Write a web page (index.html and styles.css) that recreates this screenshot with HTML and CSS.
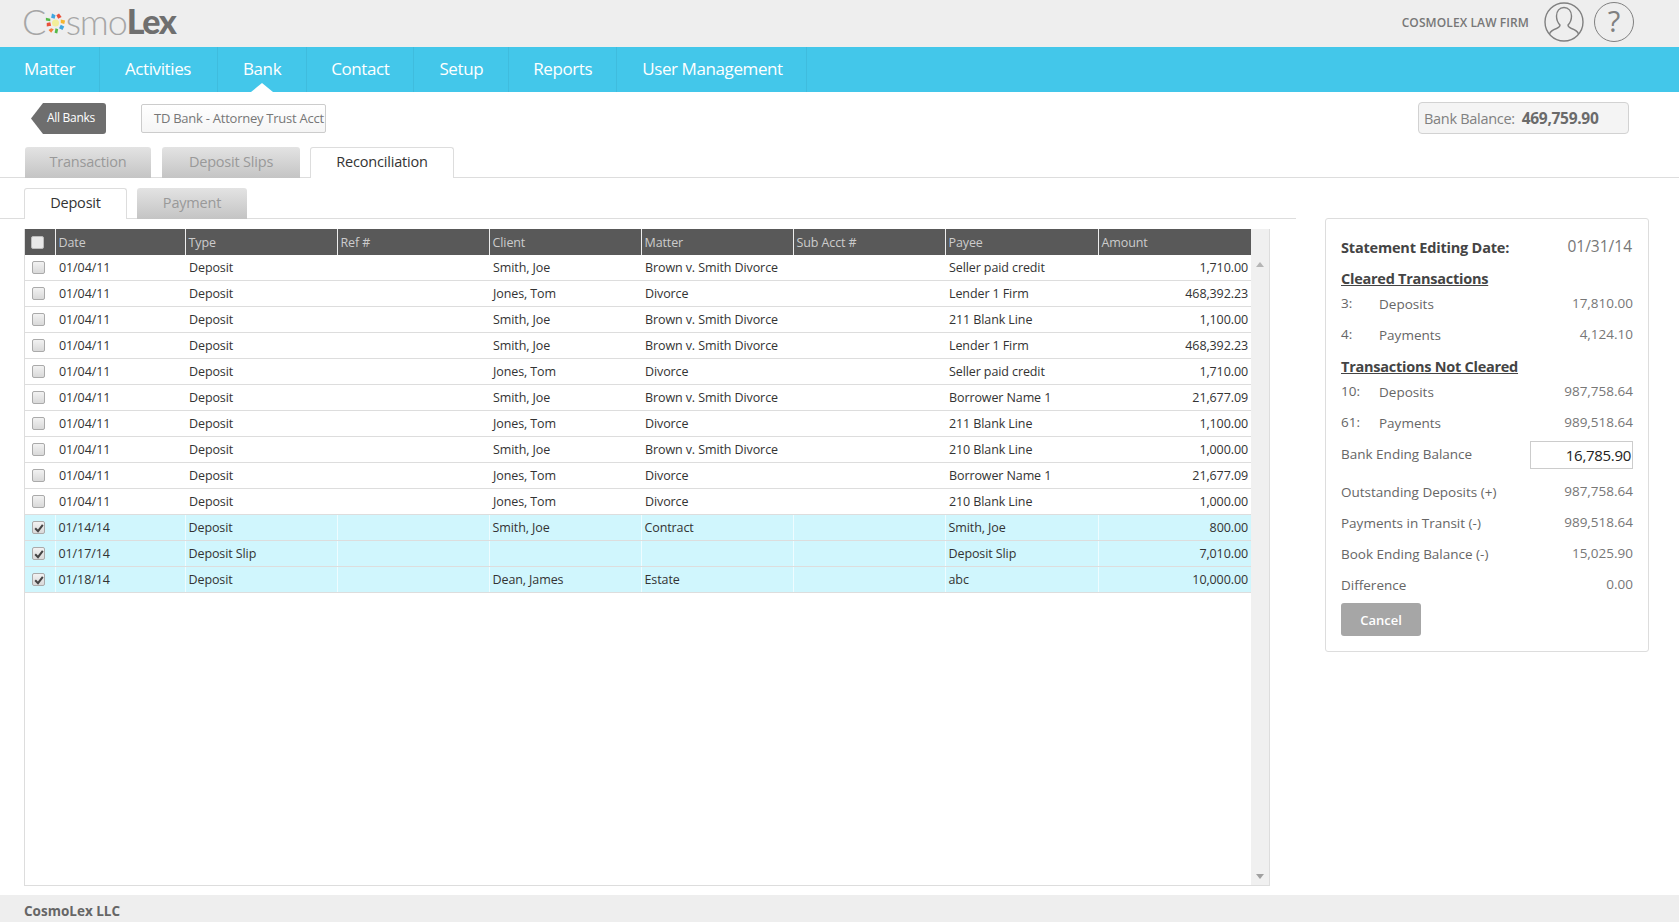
FILE: index.html
```html
<!DOCTYPE html>
<html lang="en">
<head>
<meta charset="utf-8">
<title>CosmoLex - Bank Reconciliation</title>
<link rel="stylesheet" href="styles.css">
</head>
<body>
<header class="top">
  <div class="logo"><span class="logo-thin">C</span><svg class="logo-mark" viewBox="0 0 24 24" width="21" height="24" aria-hidden="true">
    <circle cx="12" cy="12" r="4" fill="#f3ee9a"/>
    <path d="M8 1l4 2-1 4-4-1z" fill="#3fa7e0"/><path d="M13 3l3-2 3 4-4 2z" fill="#e8503a"/>
    <path d="M18 8l5 1-1 4-4-1z" fill="#f5b52e"/><path d="M18 14l4 2-2 4-4-2z" fill="#3fa7e0"/>
    <path d="M12 18l3 1-1 5-3-1z" fill="#55b948"/><path d="M7 18l3 1-3 4-3-3z" fill="#f5803a"/>
    <path d="M2 12l4-1 1 4-5 1z" fill="#e8503a"/><path d="M1 6l5 1v3L1 9z" fill="#55b948"/>
  </svg><span class="logo-thin logo-smo">smo</span><span class="logo-bold">Lex</span></div>
  <div class="top-right">
    <span class="firm">COSMOLEX LAW FIRM</span>
    <svg class="round-icon" viewBox="0 0 40 40" width="40" height="40" aria-hidden="true">
      <circle cx="20" cy="20" r="19" fill="none" stroke="#808080" stroke-width="1.4"/>
      <path d="M5.500 32c1-3 4-4.500 7-5.500 2.500-1 3.500-2 3.500-3.500-2-2-3.500-5-3.500-9C12.500 9 15.500 5.500 20 5.500S27.500 9 27.500 14c0 4-1.500 7-3.500 9 0 1.500 1 2.500 3.500 3.500 3 1 6 2.500 7 5.500" fill="none" stroke="#808080" stroke-width="1.4"/>
    </svg>
    <span class="help">?</span>
  </div>
</header>

<nav class="nav">
  <a class="nav-item">Matter</a>
  <a class="nav-item">Activities</a>
  <a class="nav-item is-current">Bank</a>
  <a class="nav-item">Contact</a>
  <a class="nav-item">Setup</a>
  <a class="nav-item">Reports</a>
  <a class="nav-item">User Management</a>
</nav>

<div class="toolbar">
  <span class="back-tag"><span>All Banks</span></span>
  <span class="bank-select">TD Bank - Attorney Trust Acct</span>
  <span class="balance">Bank Balance:<b>469,759.90</b></span>
</div>

<div class="tabs tabs-main">
  <span class="tab">Transaction</span>
  <span class="tab">Deposit Slips</span>
  <span class="tab is-active">Reconciliation</span>
</div>

<main class="content">
  <section class="left">
    <div class="tabs tabs-sub">
      <span class="tab tab-deposit is-active">Deposit</span>
      <span class="tab tab-payment">Payment</span>
    </div>
    <div class="grid-box">
      <div class="grid-wrap">
        <table class="grid">
          <colgroup><col class="c-check"><col class="c-date"><col class="c-mid"><col class="c-mid"><col class="c-mid"><col class="c-mid"><col class="c-mid"><col class="c-payee"><col class="c-amount"></colgroup>
          <thead>
            <tr><th class="cell-check"><span class="cb cb-head"></span></th><th>Date</th><th>Type</th><th>Ref #</th><th>Client</th><th>Matter</th><th>Sub Acct #</th><th>Payee</th><th>Amount</th></tr>
          </thead>
          <tbody>
            <tr><td class="cell-check"><span class="cb"></span></td><td>01/04/11</td><td>Deposit</td><td></td><td>Smith, Joe</td><td>Brown v. Smith Divorce</td><td></td><td>Seller paid credit</td><td class="num">1,710.00</td></tr>
            <tr><td class="cell-check"><span class="cb"></span></td><td>01/04/11</td><td>Deposit</td><td></td><td>Jones, Tom</td><td>Divorce</td><td></td><td>Lender 1 Firm</td><td class="num">468,392.23</td></tr>
            <tr><td class="cell-check"><span class="cb"></span></td><td>01/04/11</td><td>Deposit</td><td></td><td>Smith, Joe</td><td>Brown v. Smith Divorce</td><td></td><td>211 Blank Line</td><td class="num">1,100.00</td></tr>
            <tr><td class="cell-check"><span class="cb"></span></td><td>01/04/11</td><td>Deposit</td><td></td><td>Smith, Joe</td><td>Brown v. Smith Divorce</td><td></td><td>Lender 1 Firm</td><td class="num">468,392.23</td></tr>
            <tr><td class="cell-check"><span class="cb"></span></td><td>01/04/11</td><td>Deposit</td><td></td><td>Jones, Tom</td><td>Divorce</td><td></td><td>Seller paid credit</td><td class="num">1,710.00</td></tr>
            <tr><td class="cell-check"><span class="cb"></span></td><td>01/04/11</td><td>Deposit</td><td></td><td>Smith, Joe</td><td>Brown v. Smith Divorce</td><td></td><td>Borrower Name 1</td><td class="num">21,677.09</td></tr>
            <tr><td class="cell-check"><span class="cb"></span></td><td>01/04/11</td><td>Deposit</td><td></td><td>Jones, Tom</td><td>Divorce</td><td></td><td>211 Blank Line</td><td class="num">1,100.00</td></tr>
            <tr><td class="cell-check"><span class="cb"></span></td><td>01/04/11</td><td>Deposit</td><td></td><td>Smith, Joe</td><td>Brown v. Smith Divorce</td><td></td><td>210 Blank Line</td><td class="num">1,000.00</td></tr>
            <tr><td class="cell-check"><span class="cb"></span></td><td>01/04/11</td><td>Deposit</td><td></td><td>Jones, Tom</td><td>Divorce</td><td></td><td>Borrower Name 1</td><td class="num">21,677.09</td></tr>
            <tr><td class="cell-check"><span class="cb"></span></td><td>01/04/11</td><td>Deposit</td><td></td><td>Jones, Tom</td><td>Divorce</td><td></td><td>210 Blank Line</td><td class="num">1,000.00</td></tr>
            <tr class="is-selected"><td class="cell-check"><span class="cb"><svg viewBox="0 0 14 14" width="14" height="14" aria-hidden="true"><path d="M3.200 7.200l2.800 3 4.800-6.400" fill="none" stroke="#444" stroke-width="2"/></svg></span></td><td>01/14/14</td><td>Deposit</td><td></td><td>Smith, Joe</td><td>Contract</td><td></td><td>Smith, Joe</td><td class="num">800.00</td></tr>
            <tr class="is-selected"><td class="cell-check"><span class="cb"><svg viewBox="0 0 14 14" width="14" height="14" aria-hidden="true"><path d="M3.200 7.200l2.800 3 4.800-6.400" fill="none" stroke="#444" stroke-width="2"/></svg></span></td><td>01/17/14</td><td>Deposit Slip</td><td></td><td></td><td></td><td></td><td>Deposit Slip</td><td class="num">7,010.00</td></tr>
            <tr class="is-selected"><td class="cell-check"><span class="cb"><svg viewBox="0 0 14 14" width="14" height="14" aria-hidden="true"><path d="M3.200 7.200l2.800 3 4.800-6.400" fill="none" stroke="#444" stroke-width="2"/></svg></span></td><td>01/18/14</td><td>Deposit</td><td></td><td>Dean, James</td><td>Estate</td><td></td><td>abc</td><td class="num">10,000.00</td></tr>
          </tbody>
        </table>
      </div>
      <div class="scrollbar">
        <span class="arrow arrow-up"></span>
        <span class="arrow arrow-down"></span>
      </div>
    </div>
  </section>

  <aside class="panel">
    <div class="row row-date"><strong>Statement Editing Date:</strong><span class="val val-date">01/31/14</span></div>
    <h3 class="panel-head">Cleared Transactions</h3>
    <div class="row"><span class="count">3:</span><span class="label">Deposits</span><span class="val">17,810.00</span></div>
    <div class="row"><span class="count">4:</span><span class="label">Payments</span><span class="val">4,124.10</span></div>
    <h3 class="panel-head panel-head-next">Transactions Not Cleared</h3>
    <div class="row"><span class="count">10:</span><span class="label">Deposits</span><span class="val">987,758.64</span></div>
    <div class="row"><span class="count">61:</span><span class="label">Payments</span><span class="val">989,518.64</span></div>
    <div class="row row-input"><span class="label">Bank Ending Balance</span><span class="ending">16,785.90</span></div>
    <div class="row"><span class="label">Outstanding Deposits (+)</span><span class="val">987,758.64</span></div>
    <div class="row"><span class="label">Payments in Transit (-)</span><span class="val">989,518.64</span></div>
    <div class="row"><span class="label">Book Ending Balance (-)</span><span class="val">15,025.90</span></div>
    <div class="row"><span class="label">Difference</span><span class="val">0.00</span></div>
    <button class="cancel" type="button">Cancel</button>
  </aside>
</main>

<footer class="footer">CosmoLex LLC</footer>
</body>
</html>
```
FILE: styles.css
```css
* { box-sizing: border-box; }
html, body { height: 100%; }
body {
  margin: 0;
  height: 922px;
  display: flex;
  flex-direction: column;
  overflow: hidden;
  background: #fff;
  color: #333;
  font-family: "Open Sans", "Noto Sans", "Liberation Sans", sans-serif;
  font-size: 13px;
}

/* Header */
.top {
  height: 47px;
  flex: none;
  background: #eee;
  display: flex;
  align-items: center;
  justify-content: space-between;
  padding: 0 45px 3px 24px;
}
.logo {
  display: flex;
  align-items: center;
  font-family: "Lato", sans-serif;
  font-size: 36px;
  line-height: 40px;
  color: #a6a6a6;
  letter-spacing: -0.7px;
  margin: -2px 0 0 -2px;
}
.logo-thin { font-weight: 300; }
.logo-smo { letter-spacing: -1.1px; }
.logo-bold { font-size: 34px; font-weight: 900; color: #6f6f6f; letter-spacing: -1.5px; }
.logo-mark { margin: 3px 0 0 -1px; }
.top-right { display: flex; align-items: center; }
.firm { font-weight: 600; font-size: 12px; color: #777; margin-right: 15px; letter-spacing: 0.1px; }
.round-icon { display: block; margin-right: 10px; }
.help {
  width: 40px;
  height: 40px;
  border: 1.4px solid #808080;
  border-radius: 50%;
  text-align: center;
  font-size: 29px;
  line-height: 36px;
  color: #808080;
}

/* Nav */
.nav {
  height: 45px;
  flex: none;
  background: #43c7ea;
  display: flex;
}
.nav-item {
  position: relative;
  padding: 0 25px;
  border-right: 1px solid #3fbcde;
  color: #fff;
  font-size: 17px;
  line-height: 43px;
  letter-spacing: -0.4px;
}
.nav-item:nth-child(1) { padding: 0 24px; }
.nav-item:nth-child(2) { padding-right: 26px; }
.nav-item:nth-child(4) { padding: 0 24px; }
.nav-item:nth-child(6) { padding: 0 24px; }
.nav-item:nth-child(7) { padding-right: 23px; }
.is-current::after {
  content: "";
  position: absolute;
  left: 50%;
  bottom: 0;
  margin-left: -11px;
  border: 11px solid transparent;
  border-top: 0;
  border-bottom: 9px solid #fff;
}

/* Toolbar */
.toolbar {
  flex: none;
  height: 55px;
  display: flex;
  align-items: center;
  padding: 0 50px 2px 31px;
}
.back-tag {
  width: 75px;
  height: 31px;
  background: #6e6e6e;
  color: #fff;
  font-size: 12px;
  line-height: 29px;
  padding-left: 16px;
  border-radius: 3px;
  clip-path: polygon(0 50%, 12px 0, 100% 0, 100% 100%, 12px 100%);
  letter-spacing: -0.3px;
}
.bank-select {
  margin-left: 35px;
  width: 185px;
  height: 29px;
  border: 1px solid #ccc;
  border-radius: 2px;
  background: linear-gradient(#fff, #f5f5f5);
  padding-left: 12px;
  line-height: 27px;
  color: #777;
  white-space: nowrap;
  overflow: hidden;
  letter-spacing: -0.25px;
}
.balance {
  margin: -2px 0 0 auto;
  width: 211px;
  height: 32px;
  border: 1px solid #d2d2d2;
  border-radius: 4px;
  background: #f4f4f4;
  padding-left: 5px;
  font-size: 14.500px;
  line-height: 30px;
  color: #808080;
  letter-spacing: -0.3px;
}
.balance b { margin-left: 7px; color: #6a6a6a; font-size: 15.500px; }

/* Tabs */
.tabs {
  flex: none;
  display: flex;
  border-bottom: 1px solid #ddd;
  padding-left: 24px;
}
.tabs-main { height: 31px; gap: 11px; padding-left: 25px; }
.tabs-sub { height: 31px; gap: 10px; }
.tab {
  width: 126px;
  height: 31px;
  border-radius: 3px 3px 0 0;
  background: linear-gradient(#e3e3e3, #c4c4c4);
  color: #999;
  font-size: 14.500px;
  line-height: 29px;
  text-align: center;
  letter-spacing: -0.2px;
}
.tabs-main .tab:nth-child(2) { width: 138px; margin-right: -1px; }
.tabs-main .tab.is-active { width: 144px; }
.tab.is-active {
  background: #fff;
  color: #333;
  border: 1px solid #ddd;
  border-bottom: 0;
  line-height: 28px;
}
.tab-deposit { width: 103px; }
.tab-payment { width: 110px; }

/* Main layout */
.content {
  flex: 1;
  min-height: 0;
  display: grid;
  grid-template-columns: 1296px 324px;
  column-gap: 29px;
}
.left {
  display: flex;
  flex-direction: column;
  padding-top: 10px;
}
.left .tabs { padding-left: 24px; }

/* Grid */
.grid-box {
  flex: none;
  width: 1246px;
  height: 657px;
  margin: 10px 0 0 24px;
  display: flex;
  border: 1px solid #ddd;
  border-top: 0;
}
.grid-wrap { width: 1226px; flex: none; }
.grid {
  width: 1226px;
  table-layout: fixed;
  border-collapse: collapse;
  font-size: 12.500px;
}
.c-check { width: 30px; }
.c-date { width: 130px; }
.c-mid { width: 152px; }
.c-payee { width: 153px; }
.c-amount { width: 153px; }
.grid th {
  height: 26px;
  padding: 0 3px;
  background: #595959;
  border-left: 1px solid #eee;
  color: #ccc;
  font-weight: 400;
  text-align: left;
  letter-spacing: -0.1px;
}
.grid th:first-child { border-left: 0; }
.grid td {
  height: 26px;
  padding: 0 3px 0 4px;
  border-bottom: 1px solid #ddd;
  color: #333;
  white-space: nowrap;
  letter-spacing: -0.1px;
}
.grid tbody tr:first-child td { height: 25px; }
.grid .cell-check { padding: 0 0 0 7px; }
.num { text-align: right; }
.grid .is-selected td {
  background: #d0f6fd;
  border-left: 1px solid #eefcff;
  padding-left: 3px;
}
.grid .is-selected .cell-check { border-left: 0; padding-left: 7px; }
.cb {
  display: block;
  width: 13px;
  height: 13px;
  border: 1px solid #aaa;
  border-radius: 2px;
  background: linear-gradient(#f2f2f2, #d9d9d9);
  position: relative;
}
.cb svg { display: block; margin: -1px; }
.cb-head { background: #e8e8e8; border-color: #bbb; margin-left: -1px; }

.scrollbar {
  flex: 1;
  background: #f0f0f0;
  display: flex;
  flex-direction: column;
  justify-content: space-between;
  align-items: center;
  padding: 33px 0 6px;
}
.arrow { width: 0; height: 0; border: 4px solid transparent; }
.arrow-up { border-top: 0; border-bottom: 5px solid #b5b5b5; }
.arrow-down { border-bottom: 0; border-top: 5px solid #a0a0a0; }

/* Panel */
.panel {
  height: 434px;
  margin-top: 40px;
  border: 1px solid #ddd;
  border-radius: 3px;
  padding: 12px 15px 0;
  color: #666;
  font-size: 13.500px;
}
.row {
  display: flex;
  align-items: center;
  height: 31px;
}
.row-date { height: 32px; }
.row-date strong { color: #444; font-size: 14.500px; letter-spacing: -0.2px; }
.val { margin: 0 0 2px auto; color: #777; }
.val-date { font-size: 15.500px; margin-right: 1px; letter-spacing: 0; }
.count { width: 38px; margin-bottom: 2px; }
.panel-head {
  margin: 6px 0 0;
  height: 19px;
  line-height: 20px;
  font-size: 14.500px;
  font-weight: 700;
  color: #444;
  text-decoration: underline;
  letter-spacing: -0.25px;
}
.panel-head-next { margin-top: 7px; }
.row-input { margin-bottom: 7px; }
.ending {
  margin: 2px 0 0 auto;
  width: 103px;
  height: 28px;
  border: 1px solid #ccc;
  padding-right: 1px;
  text-align: right;
  font-size: 15px;
  line-height: 27px;
  color: #222;
  letter-spacing: -0.3px;
}
.cancel {
  display: block;
  margin-top: 3px;
  width: 80px;
  height: 33px;
  padding: 0;
  border: 0;
  border-radius: 3px;
  background: #a6a6a6;
  color: #fff;
  font: 600 13px "Open Sans", sans-serif;
}

/* Footer */
.footer {
  flex: none;
  height: 27px;
  background: #eee;
  padding-left: 24px;
  font-weight: 700;
  font-size: 13.500px;
  line-height: 32px;
  color: #666;
}
```
